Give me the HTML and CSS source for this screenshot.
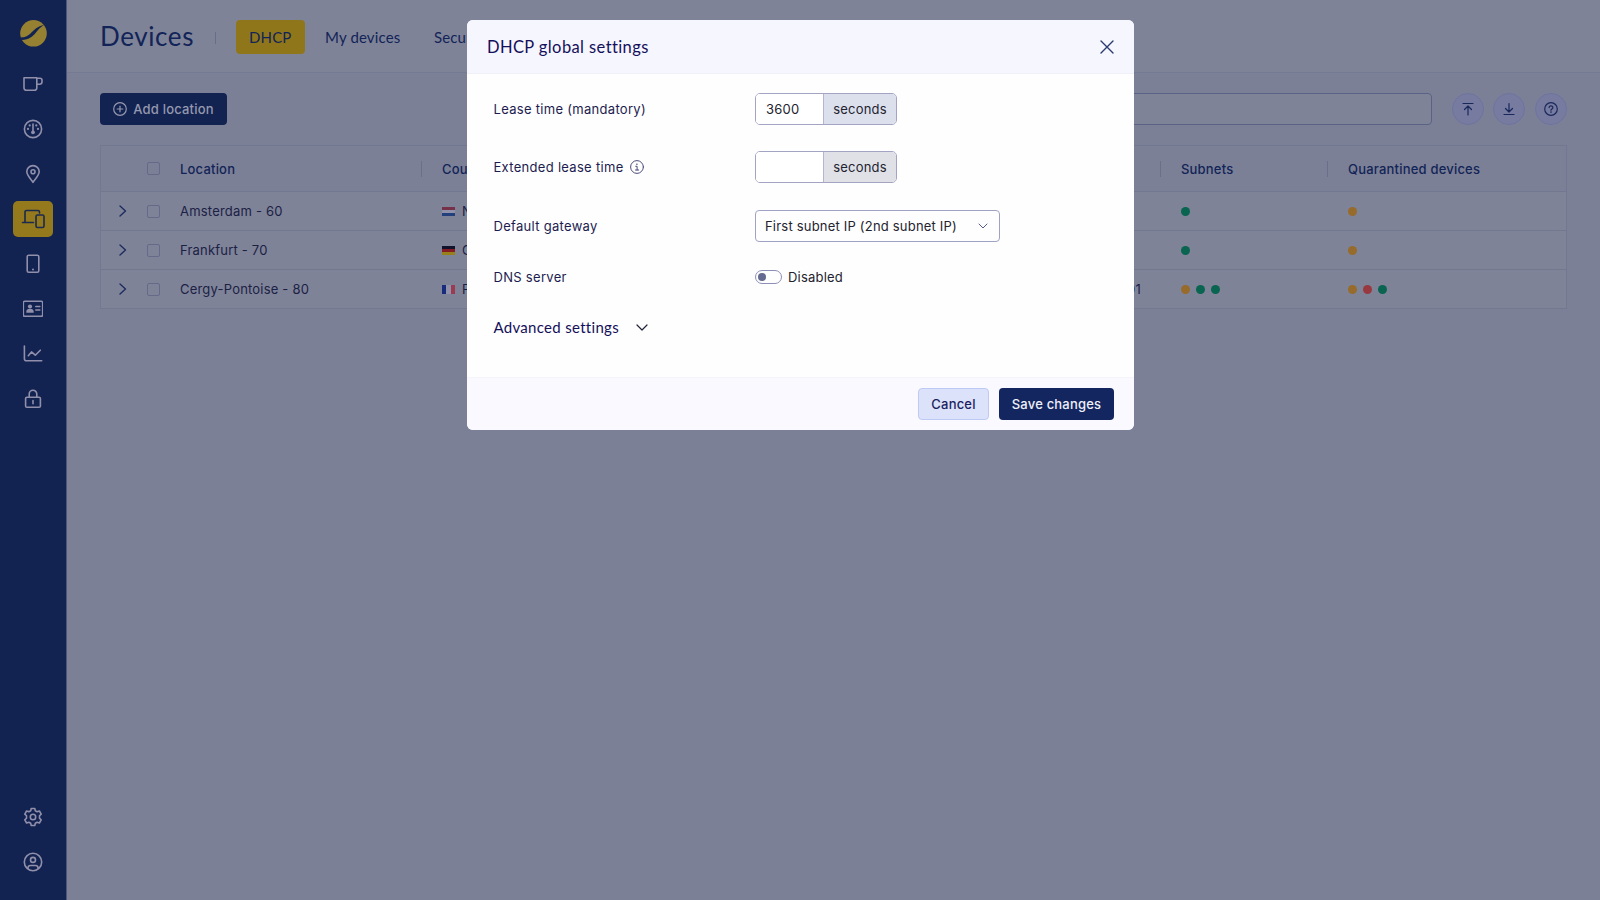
FILE: index.html
```html
<!DOCTYPE html>
<html lang="en">
<head>
    <meta charset="UTF-8">
    <meta name="viewport" content="width=device-width, initial-scale=1.0">
    <title>Devices - DHCP</title>
    <link rel="stylesheet" href="styles.css">
</head>
<body>
    <div class="container">
        <nav class="sidebar">
            <a href="#" class="logo">
                <svg width="28" height="28" viewBox="0 0 28 28"><circle cx="14.500" cy="14.300" r="13.300" fill="#968032"/><path d="M0.500 20.500L2.500 18.300C5.500 18.300 8.500 17.500 11.500 14.500C15.500 10.500 18 7.500 25.500 5.800C20.500 8.500 18.500 12 15.500 15.200C11.500 19.500 6.500 21.500 1.800 20.800Z" fill="#122352"/></svg>
            </a>
            <ul class="menu">
                <li><a href="#"><svg class="icon" viewBox="0 0 20 20"><path d="M1 3.700h12.800v10.300a2.300 2.300 0 0 1-2.300 2.300H3.300A2.300 2.300 0 0 1 1 14zM13.800 4.200h3.200a2 2 0 0 1 2 2v1.500a2.500 2.500 0 0 1-2.500 2.500h-2.700"/></svg></a></li>
                <li><a href="#"><svg class="icon" viewBox="0 0 20 20"><circle cx="10" cy="10" r="8.600"/><path d="M10 5v8"/><circle class="fill" cx="10" cy="13.300" r="1.900"/><circle class="fill" cx="6.700" cy="6.400" r="1.100"/><circle class="fill" cx="13.300" cy="6.400" r="1.100"/><circle class="fill" cx="5" cy="9.900" r="1.100"/><circle class="fill" cx="15" cy="9.900" r="1.100"/></svg></a></li>
                <li><a href="#"><svg class="icon" viewBox="0 0 20 20"><path d="M10 18.300C7.500 14.800 3.800 11 3.800 7.800a6.200 6.200 0 0 1 12.400 0C16.200 11 12.500 14.800 10 18.300z"/><circle cx="10" cy="7.800" r="2"/></svg></a></li>
                <li><a href="#" class="on"><svg class="icon wide" viewBox="0 0 24 20"><path d="M4 13V3a1.500 1.500 0 0 1 1.500-1.500h11.500a1.500 1.500 0 0 1 1.500 1.500v1M1.500 13.500h11"/><rect x="15" y="6" width="8" height="12.500" rx="1.500"/></svg></a></li>
                <li><a href="#"><svg class="icon" viewBox="0 0 20 20"><rect x="4.200" y="1.300" width="11.600" height="17" rx="1.500"/><circle class="fill" cx="10" cy="15.500" r="1"/></svg></a></li>
                <li><a href="#"><svg class="icon" viewBox="0 0 20 20"><rect x="0.300" y="2.300" width="19.400" height="15" rx="1.500"/><circle class="fill" cx="7" cy="7.500" r="2.100"/><path class="fill" d="M3.300 13.800v-1a3.600 3 0 0 1 7.400 0v1z"/><path d="M12.800 7.500h4M12.800 11h4"/></svg></a></li>
                <li><a href="#"><svg class="icon" viewBox="0 0 20 20"><path d="M1.400 2v12.800a2 2 0 0 0 2 2h15.300M5.300 11.700l3.200-3.800 3.800 3.300 5-5"/></svg></a></li>
                <li><a href="#"><svg class="icon" viewBox="0 0 20 20"><rect x="2.600" y="8.300" width="14.800" height="10" rx="1.300"/><path d="M6.200 8.300V5a3.800 3.800 0 0 1 7.600 0v3.300M10 11.500v3.200"/></svg></a></li>
            </ul>
            <ul class="menu bottom">
                <li><a href="#"><svg class="icon" viewBox="0 0 20 20"><path d="M8.200 1.500h3.600l.5 2.300 1.800 1 2.300-.8 1.800 3.100-1.700 1.700v2.400l1.700 1.700-1.800 3.100-2.300-.8-1.800 1-.5 2.300H8.200l-.5-2.300-1.800-1-2.300.8-1.800-3.100 1.700-1.700V8.800L1.800 7.100 3.600 4l2.300.8 1.800-1z"/><circle cx="10" cy="10" r="2.700"/></svg></a></li>
                <li><a href="#"><svg class="icon" viewBox="0 0 20 20"><circle cx="10" cy="10" r="8.700"/><circle cx="10" cy="7.900" r="2.500"/><path d="M4.800 16.500c0-2.200 1.200-3 2.700-3h5c1.500 0 2.700.8 2.700 3"/></svg></a></li>
            </ul>
        </nav>

        <div class="page">
            <header class="top">
                <h1>Devices</h1>
                <span class="bar"></span>
                <ul class="tabs">
                    <li><a href="#" class="on">DHCP</a></li>
                    <li><a href="#">My devices</a></li>
                    <li><a href="#">Security</a></li>
                </ul>
            </header>

            <main>
                <div class="toolbar">
                    <button class="btn-add"><svg class="icon" viewBox="0 0 14 14"><circle cx="7" cy="7" r="6.300"/><path d="M7 4.200v5.600M4.200 7h5.600"/></svg><span>Add location</span></button>
                    <input type="text" class="search">
                    <div class="tools">
                        <button><svg class="icon" viewBox="0 0 14 14"><path d="M2 1.500h10M7 13V4.200M3.500 7.500L7 4l3.500 3.500"/></svg></button>
                        <button><svg class="icon" viewBox="0 0 14 14"><path d="M2 12.500h10M7 1.500v8.300M3.500 6.500L7 10l3.500-3.500"/></svg></button>
                        <button><svg class="icon" viewBox="0 0 14 14"><circle cx="7" cy="7" r="6.300"/><path d="M5.100 5.600a1.900 1.700 0 1 1 2.700 1.500c-.6.300-.8.500-.8 1.100"/><circle class="fill" cx="7" cy="10.100" r=".8"/></svg></button>
                    </div>
                </div>

                <div class="table">
                    <div class="row head">
                        <span></span>
                        <span><i class="check"></i></span>
                        <span class="sep">Location</span>
                        <span class="sep">Country</span>
                        <span class="sep">Subnets</span>
                        <span>Quarantined devices</span>
                    </div>
                    <div class="row">
                        <span><svg class="arrow" viewBox="0 0 8 12"><path d="M1 1l5.500 5L1 11"/></svg></span>
                        <span><i class="check"></i></span>
                        <span>Amsterdam - 60</span>
                        <span><i class="flag nl"></i>Netherlands</span>
                        <span><i class="dot green"></i></span>
                        <span><i class="dot orange"></i></span>
                    </div>
                    <div class="row">
                        <span><svg class="arrow" viewBox="0 0 8 12"><path d="M1 1l5.500 5L1 11"/></svg></span>
                        <span><i class="check"></i></span>
                        <span>Frankfurt - 70</span>
                        <span><i class="flag de"></i>Germany</span>
                        <span><i class="dot green"></i></span>
                        <span><i class="dot orange"></i></span>
                    </div>
                    <div class="row">
                        <span><svg class="arrow" viewBox="0 0 8 12"><path d="M1 1l5.500 5L1 11"/></svg></span>
                        <span><i class="check"></i></span>
                        <span>Cergy-Pontoise - 80</span>
                        <span><i class="flag fr"></i>France<b class="num">101</b></span>
                        <span><i class="dot orange"></i><i class="dot green"></i><i class="dot green"></i></span>
                        <span><i class="dot orange"></i><i class="dot red"></i><i class="dot green"></i></span>
                    </div>
                </div><!-- table -->
            </main>
        </div><!-- page -->
    </div><!-- container -->

    <div class="modal">
        <div class="modal-head">
            <h2>DHCP global settings</h2>
            <svg class="close" viewBox="0 0 14 14"><path d="M1 1l12 12M13 1L1 13"/></svg>
        </div>
        <div class="modal-body">
            <div class="field">
                <label>Lease time (mandatory)</label>
                <div class="group"><input type="text" value="3600"><span class="unit blue">seconds</span></div>
            </div>
            <div class="field">
                <label>Extended lease time <svg class="info" viewBox="0 0 14 14"><circle cx="7" cy="7" r="6.400"/><path d="M5.700 6.300H7.100V10M5.500 10h3.200"/><circle class="fill" cx="6.900" cy="4.200" r=".8"/></svg></label>
                <div class="group"><input type="text"><span class="unit">seconds</span></div>
            </div>
            <div class="field">
                <label>Default gateway</label>
                <div class="select"><span>First subnet IP (2nd subnet IP)</span><svg class="down" viewBox="0 0 10 6"><path d="M1 1l4 4 4-4"/></svg></div>
            </div>
            <div class="field small">
                <label>DNS server</label>
                <div class="toggle"><i></i><span>Disabled</span></div>
            </div>
            <div class="advanced"><span>Advanced settings</span><svg viewBox="0 0 12 7"><path d="M1 1l5 5 5-5"/></svg></div>
        </div>
        <div class="modal-foot">
            <button class="cancel">Cancel</button>
            <button class="save">Save changes</button>
        </div>
    </div><!-- modal -->
</body>
</html>
```

FILE: styles.css
```css
*{
    box-sizing: border-box;
}
html, body{
    width: 100%;
    height: 100%;
    margin: 0;
    overflow: hidden;
}
body{
    position: relative;
    font-family: Inter, "Liberation Sans", sans-serif;
    font-size: 13px;
    letter-spacing: 0.2px;
    color: #1b2145;
}
ul{
    list-style: none;
    margin: 0;
    padding: 0;
}
a{
    text-decoration: none;
    color: inherit;
}
h1, h2{
    margin: 0;
    font-family: Lato, sans-serif;
    font-weight: 400;
}
button, input{
    font: inherit;
    letter-spacing: inherit;
    border: 0;
    padding: 0;
}
svg{
    display: block;
    flex: none;
    fill: none;
    stroke: currentColor;
    stroke-linecap: round;
    stroke-linejoin: round;
}
svg .fill{
    fill: currentColor;
    stroke: none;
}
.container{
    display: flex;
    height: 100%;
    background: #7c8096;
}

/* sidebar */
.sidebar{
    width: 67px;
    display: flex;
    flex-direction: column;
    align-items: center;
    padding: 19px 0 20px;
    background: #122352;
    border-right: 1px solid #4d557a;
    color: #918faa;
}
.logo{
    margin-bottom: 19px;
}
.logo svg{
    stroke: none;
}
.menu{
    display: grid;
    gap: 9px;
}
.menu a{
    width: 40px;
    height: 36px;
    display: flex;
    align-items: center;
    justify-content: center;
    border-radius: 5px;
}
.menu .icon{
    width: 20px;
    height: 20px;
    stroke-width: 1.6;
}
.menu .icon.wide{
    width: 24px;
}
.menu .on{
    background: #947a1d;
    color: #1b2a4d;
}
.bottom{
    margin-top: auto;
}

/* header */
.page{
    flex: 1;
}
.top{
    height: 73px;
    display: flex;
    align-items: center;
    padding-left: 33px;
    background: #7f8398;
    border-bottom: 1px solid #747a91;
    color: #122457;
    font-family: Lato, sans-serif;
}
.top h1{
    width: 115px;
    font-size: 26px;
    letter-spacing: 0.6px;
}
.bar{
    width: 1px;
    height: 12px;
    margin: 3px 20px 0 0;
    background: #686e8a;
}
.tabs{
    display: flex;
    gap: 7.500px;
    padding-top: 2px;
    font-size: 15px;
    letter-spacing: 0.15px;
}
.tabs a{
    display: block;
    padding: 0 13px;
    line-height: 34px;
    border-radius: 4px;
}
.tabs .on{
    background: #8f761b;
}

main{
    padding: 20px 33px 0 33px;
}
.toolbar{
    display: flex;
    align-items: center;
    height: 32px;
    margin-bottom: 20px;
}
.btn-add{
    width: 127px;
    height: 32px;
    display: flex;
    align-items: center;
    justify-content: center;
    gap: 6px;
    background: #122352;
    border-radius: 4px;
    color: #9698ae;
    font-weight: 500;
}
.toolbar .icon{
    width: 14px;
    height: 14px;
    stroke-width: 1.2;
}
.search{
    flex: 1;
    height: 32px;
    margin: 0 20px 0 400px;
    background: #7f8398;
    border: 1px solid #5a6386;
    border-radius: 4px;
}
.tools{
    display: flex;
    gap: 9.700px;
}
.tools button{
    width: 32px;
    height: 32px;
    display: flex;
    align-items: center;
    justify-content: center;
    background: #777ba0;
    border: 1px solid #6e74a0;
    border-radius: 50%;
    color: #18285a;
}

/* table */
.table{
    border: 1px solid #717890;
    background: #7f8398;
}
.row{
    display: grid;
    grid-template-columns: 46px 33px 262px 739px 167px 1fr;
    align-items: center;
    height: 39px;
    border-top: 1px solid #717890;
}
.row.head{
    height: 45px;
    border-top: 0;
    background: #7c8096;
    color: #122457;
    font-weight: 500;
}
.row span{
    display: flex;
    align-items: center;
}
.head .sep{
    height: 16px;
    margin-right: 20px;
    border-right: 1px solid #6a708b;
}
.arrow{
    width: 8px;
    height: 12px;
    margin-left: 18px;
    color: #1c2c5e;
    stroke-width: 1.4;
}
.check{
    width: 13px;
    height: 13px;
    border: 1px solid #646a87;
    border-radius: 2px;
}
.flag{
    width: 13px;
    height: 9px;
    margin-right: 7px;
}
.nl{
    background: linear-gradient(#76304a 33%, #8f92a8 33% 66%, #24407c 66%);
}
.de{
    background: linear-gradient(#11122b 33%, #851b25 33% 66%, #98801b 66%);
}
.fr{
    background: linear-gradient(90deg, #182b7c 33%, #8f92a8 33% 66%, #9a3b52 66%);
}
.num{
    margin: 0 40px 0 auto;
    font-weight: 400;
}
.dot{
    width: 9px;
    height: 9px;
    margin-right: 6px;
    border-radius: 50%;
}
.green{
    background: #096450;
}
.orange{
    background: #966b2c;
}
.red{
    background: #98393f;
}

/* modal */
.modal{
    position: absolute;
    top: 20px;
    left: 467px;
    width: 667px;
    height: 410px;
    display: flex;
    flex-direction: column;
    background: #fefefe;
    border-radius: 6px;
    overflow: hidden;
    color: #1d1c50;
}
.modal-head{
    height: 54px;
    display: flex;
    align-items: center;
    justify-content: space-between;
    padding: 0 20px;
    background: #f6f6ff;
    border-bottom: 1px solid #f0f1f8;
}
.modal-head h2{
    font-size: 16.500px;
    letter-spacing: 0.4px;
    color: #14105a;
}
.close{
    width: 14px;
    height: 14px;
    color: #2b3a6e;
    stroke-width: 1.4;
}
.modal-body{
    flex: 1;
    padding: 19px 26.500px 0;
}
.field{
    display: flex;
    align-items: center;
    height: 32px;
    margin-bottom: 26.400px;
}
.field.small{
    height: 20px;
    margin-top: -1px;
    margin-bottom: 30px;
}
.field label{
    width: 261.500px;
    display: flex;
    align-items: center;
    gap: 6px;
    letter-spacing: 0.3px;
}
.info{
    width: 14px;
    height: 14px;
    color: #4a4c7c;
}
.group{
    display: flex;
    width: 142px;
    height: 32px;
    border: 1px solid #a3a4c4;
    border-radius: 5px;
    overflow: hidden;
    color: #23232f;
}
.group input{
    width: 68px;
    padding-left: 10px;
    border-right: 1px solid #b4b6cf;
    background: #fff;
    color: inherit;
}
.unit{
    flex: 1;
    background: #e0e1e7;
    text-align: center;
    line-height: 31px;
}
.unit.blue{
    background: #dce0ec;
}
.select{
    width: 245px;
    height: 32px;
    display: flex;
    align-items: center;
    justify-content: space-between;
    padding: 0 11px 0 9px;
    border: 1px solid #9fa3c3;
    border-radius: 4px;
    color: #23232f;
}
.down{
    width: 10px;
    height: 6px;
    color: #56598c;
}
.toggle{
    display: flex;
    align-items: center;
    gap: 6px;
    color: #23232f;
}
.toggle i{
    width: 27px;
    height: 14px;
    padding: 2px;
    border: 1px solid #8d8fb8;
    border-radius: 7px;
}
.toggle i::before{
    content: "";
    display: block;
    width: 8px;
    height: 8px;
    border-radius: 50%;
    background: #646a90;
}
.advanced{
    display: flex;
    align-items: center;
    gap: 17px;
    height: 20px;
    font-family: Lato, sans-serif;
    font-size: 15px;
    letter-spacing: 0.3px;
    color: #14105a;
}
.advanced span{
    padding-bottom: 1px;
}
.advanced svg{
    width: 12px;
    height: 7px;
    color: #23233a;
    stroke-width: 1.2;
}
.modal-foot{
    height: 53px;
    display: flex;
    align-items: center;
    justify-content: flex-end;
    gap: 10px;
    padding: 0 20px 1px;
    background: #faf9ff;
    border-top: 1px solid #f5f4fa;
}
.modal-foot button{
    height: 32px;
    border-radius: 4px;
    font-weight: 500;
}
.cancel{
    width: 71px;
    background: #dce2fa;
    border: 1px solid #bccaf4;
    color: #1b2160;
}
.save{
    width: 115px;
    background: #142660;
    color: #eef0fa;
}
```
